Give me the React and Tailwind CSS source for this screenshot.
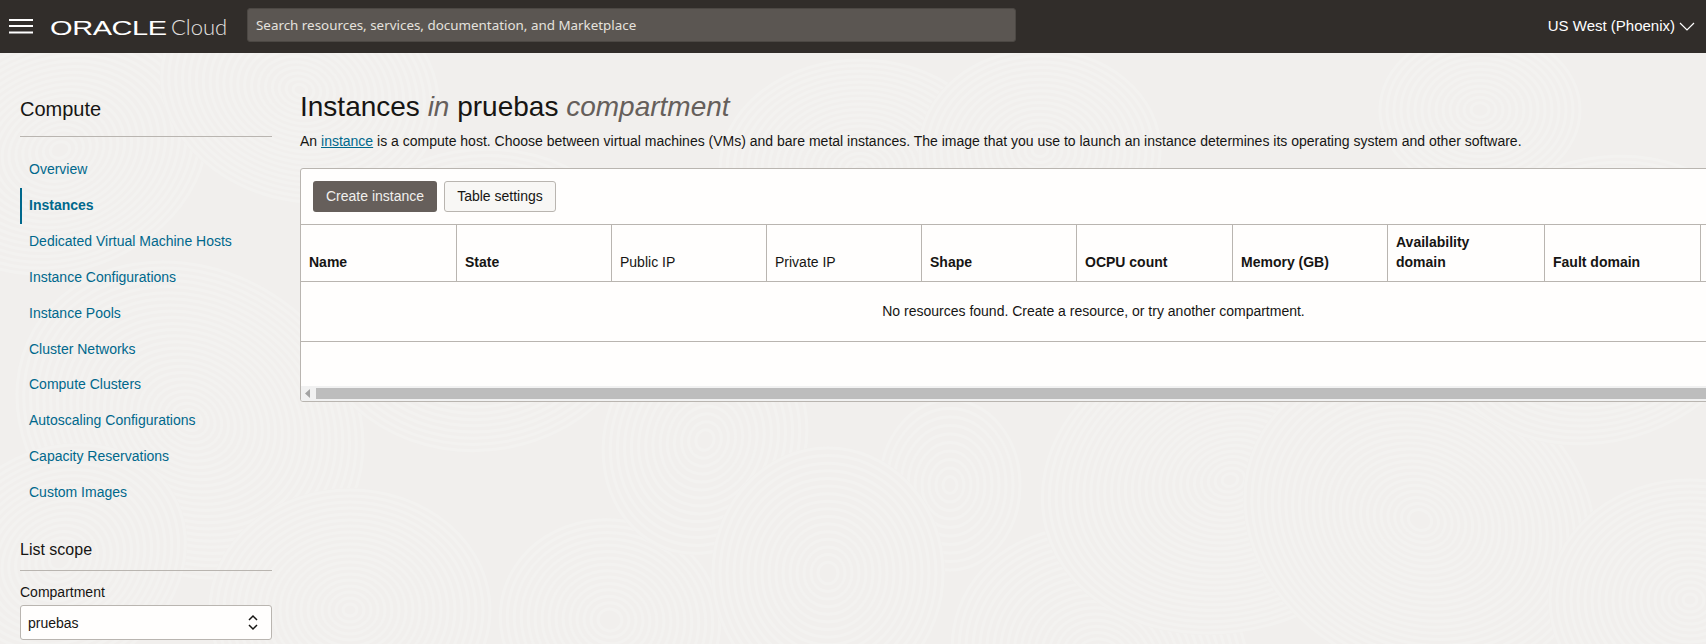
import React from "react";

const navItems = [
  "Overview",
  "Instances",
  "Dedicated Virtual Machine Hosts",
  "Instance Configurations",
  "Instance Pools",
  "Cluster Networks",
  "Compute Clusters",
  "Autoscaling Configurations",
  "Capacity Reservations",
  "Custom Images",
];

const cols = [
  { label: "Name", w: "w-[156px]", bold: true },
  { label: "State", w: "w-[155px]", bold: true },
  { label: "Public IP", w: "w-[155px]", bold: false },
  { label: "Private IP", w: "w-[155px]", bold: false },
  { label: "Shape", w: "w-[155px]", bold: true },
  { label: "OCPU count", w: "w-[156px]", bold: true },
  { label: "Memory (GB)", w: "w-[155px]", bold: true },
  { label: "Availability domain", w: "w-[157px]", bold: true },
  { label: "Fault domain", w: "w-[156px]", bold: true },
  { label: "", w: "w-[100px]", bold: true },
];

// cx, cy, rx, ry, rotation
const swirls = [
  [60, 150, 150, 120, -20], [300, 90, 140, 110, 15], [190, 420, 180, 150, 30],
  [480, 300, 170, 150, -10], [350, 610, 140, 120, 0], [60, 560, 130, 110, -30],
  [610, 620, 110, 100, 10], [1100, 660, 150, 130, 20], [1230, 480, 190, 150, -15],
  [1420, 520, 180, 150, 25], [1600, 300, 170, 140, -20], [1690, 600, 140, 120, 0],
  [860, 170, 140, 110, 0], [1040, 150, 120, 100, 0], [1480, 110, 100, 80, 0],
  [705, 440, 100, 115, 20], [950, 485, 70, 85, 0], [828, 573, 115, 125, 0],
];

function Background() {
  return (
    <svg className="absolute inset-0 w-full h-full" width="1706" height="644" aria-hidden="true">
      <rect width="1706" height="644" fill="#f1efed" />
      {swirls.map(([cx, cy, rx, ry, rot], i) => (
        <g key={i} transform={`rotate(${rot} ${cx} ${cy})`}>
          <ellipse cx={cx} cy={cy} rx={rx + 2} ry={ry + 2} fill="#f1efed" />
          {Array.from({ length: Math.floor(rx / 7) }, (_, k) => (
            <ellipse
              key={k}
              cx={cx}
              cy={cy}
              rx={rx - k * 7}
              ry={ry - (k * 7 * ry) / rx}
              fill="none"
              stroke="#f3f2f0"
              strokeWidth="3"
            />
          ))}
        </g>
      ))}
    </svg>
  );
}

function Header() {
  return (
    <header className="relative z-10 h-[53px] bg-[#312d2a] flex items-center text-white shrink-0">
      <svg className="ml-[9px] shrink-0" width="24" height="15" viewBox="0 0 24 15" aria-hidden="true">
        <rect y="0" width="24" height="2" fill="#fff" />
        <rect y="6" width="24" height="2" fill="#fff" />
        <rect y="12.5" width="24" height="2" fill="#fff" />
      </svg>
      <div className="ml-[17px] w-[180px] shrink-0 flex items-baseline">
        <span className="inline-block w-[114px] origin-left scale-x-[1.38] font-['Liberation_Sans'] text-[21px] leading-none tracking-[-0.3px]">
          ORACLE
        </span>
        <span className="ml-[7px] font-['Lato'] font-light text-[22px] leading-none text-[#e4e2e0]">Cloud</span>
      </div>
      <div className="ml-[17px] mb-[3px] w-[769px] h-[34px] bg-[#5b5652] rounded-[3px] border border-[#4c4844] flex items-center pl-[8px] font-['Noto_Sans'] text-[13.4px] text-[#e5e2de]">
        Search resources, services, documentation, and Marketplace
      </div>
      <div className="ml-auto mr-[11px] mb-[1px] flex items-center gap-[4px] font-['Liberation_Sans'] text-[15px] text-white">
        <span>US West (Phoenix)</span>
        <svg width="16" height="9" viewBox="0 0 16 9" fill="none" aria-hidden="true">
          <path d="M1 1l7 7 7-7" stroke="#fff" strokeWidth="1.2" />
        </svg>
      </div>
    </header>
  );
}

function Sidebar() {
  return (
    <aside className="w-[252px] ml-[20px] shrink-0 pt-[44px]">
      <h2 className="text-[20px] leading-[24px] text-[#161513] pb-[15px] border-b border-[#b9b5b0]">Compute</h2>
      <nav className="mt-[15px] flex flex-col">
        {navItems.map((item) => (
          <a
            key={item}
            className={
              item === "Instances"
                ? "h-[35.85px] flex items-center pl-[7px] border-l-2 border-[#00688c] text-[14px] font-bold text-[#00688c]"
                : "h-[35.85px] flex items-center pl-[9px] text-[14px] text-[#00688c]"
            }
          >
            {item}
          </a>
        ))}
      </nav>
      <h3 className="mt-[29.5px] text-[16px] leading-[20px] text-[#161513] pb-[10px] border-b border-[#b9b5b0]">List scope</h3>
      <div className="mt-[13px] text-[14px] leading-[16px] text-[#161513]">Compartment</div>
      <div className="mt-[5px] h-[35px] bg-[#fffefd] border border-[#b9b5b0] rounded-[3px] flex items-center justify-between pl-[7px] pr-[12px] text-[14px] text-[#161513]">
        <span className="mt-[3px]">pruebas</span>
        <svg width="12" height="17" viewBox="0 0 12 17" fill="none" aria-hidden="true">
          <path d="M2 6l4-4 4 4M2 11l4 4 4-4" stroke="#161513" strokeWidth="1.5" />
        </svg>
      </div>
    </aside>
  );
}

function Main() {
  return (
    <main className="ml-[28px] pt-[37px] min-w-0 flex-1">
      <h1 className="text-[28px] leading-[34px] text-[#161513] whitespace-nowrap">
        Instances <em className="text-[#665f5b]">in</em> pruebas <em className="text-[#665f5b]">compartment</em>
      </h1>
      <p className="mt-[7px] text-[14px] leading-[20px] text-[#161513] whitespace-nowrap">
        An <a className="text-[#00688c] underline">instance</a> is a compute host. Choose between virtual machines (VMs) and bare metal instances. The image that you use to launch an instance determines its operating system and other software.
      </p>
      <section className="mt-[17px] w-[1500px] h-[234px] bg-[#fffefd] border border-[#b9b5b0] rounded-l-[3px] flex flex-col overflow-hidden">
        <div className="h-[55px] flex items-center gap-[7px] pl-[12px] shrink-0">
          <button className="h-[31px] w-[124px] rounded-[3px] bg-[#665f5b] text-[#f1efed] text-[14px]">Create instance</button>
          <button className="h-[31px] w-[112px] rounded-[3px] bg-[#f8f7f5] border border-[#b9b5b0] text-[#161513] text-[14px]">Table settings</button>
        </div>
        <div className="h-[58px] flex border-y border-[#b9b5b0] shrink-0">
          {cols.map((c) => (
            <div
              key={c.label || "end"}
              className={
                c.bold
                  ? `${c.w} shrink-0 border-r border-[#b9b5b0] flex items-end pb-[9px] pl-[8px] text-[14px] leading-[20px] font-bold text-[#161513]`
                  : `${c.w} shrink-0 border-r border-[#b9b5b0] flex items-end pb-[9px] pl-[8px] text-[14px] leading-[20px] text-[#161513]`
              }
            >
              <span className="block max-w-[100px]">{c.label}</span>
            </div>
          ))}
        </div>
        <div className="h-[60px] w-[1585px] flex items-center justify-center border-b border-[#b9b5b0] text-[14px] text-[#161513] shrink-0">
          No resources found. Create a resource, or try another compartment.
        </div>
        <div className="mt-auto h-[15px] bg-[#f1f1f1] flex items-center">
          <svg className="ml-[4px] shrink-0" width="6" height="9" viewBox="0 0 6 9" aria-hidden="true">
            <path d="M5 0v9L0 4.500z" fill="#a3a3a3" />
          </svg>
          <div className="ml-[5px] h-[11px] flex-1 bg-[#bdbdbd]" />
        </div>
      </section>
    </main>
  );
}

export default function App() {
  return (
    <div className="relative w-[1706px] h-[644px] overflow-hidden flex flex-col font-['Liberation_Sans',sans-serif]">
      <Background />
      <Header />
      <div className="relative z-10 flex flex-1 min-h-0">
        <Sidebar />
        <Main />
      </div>
    </div>
  );
}
